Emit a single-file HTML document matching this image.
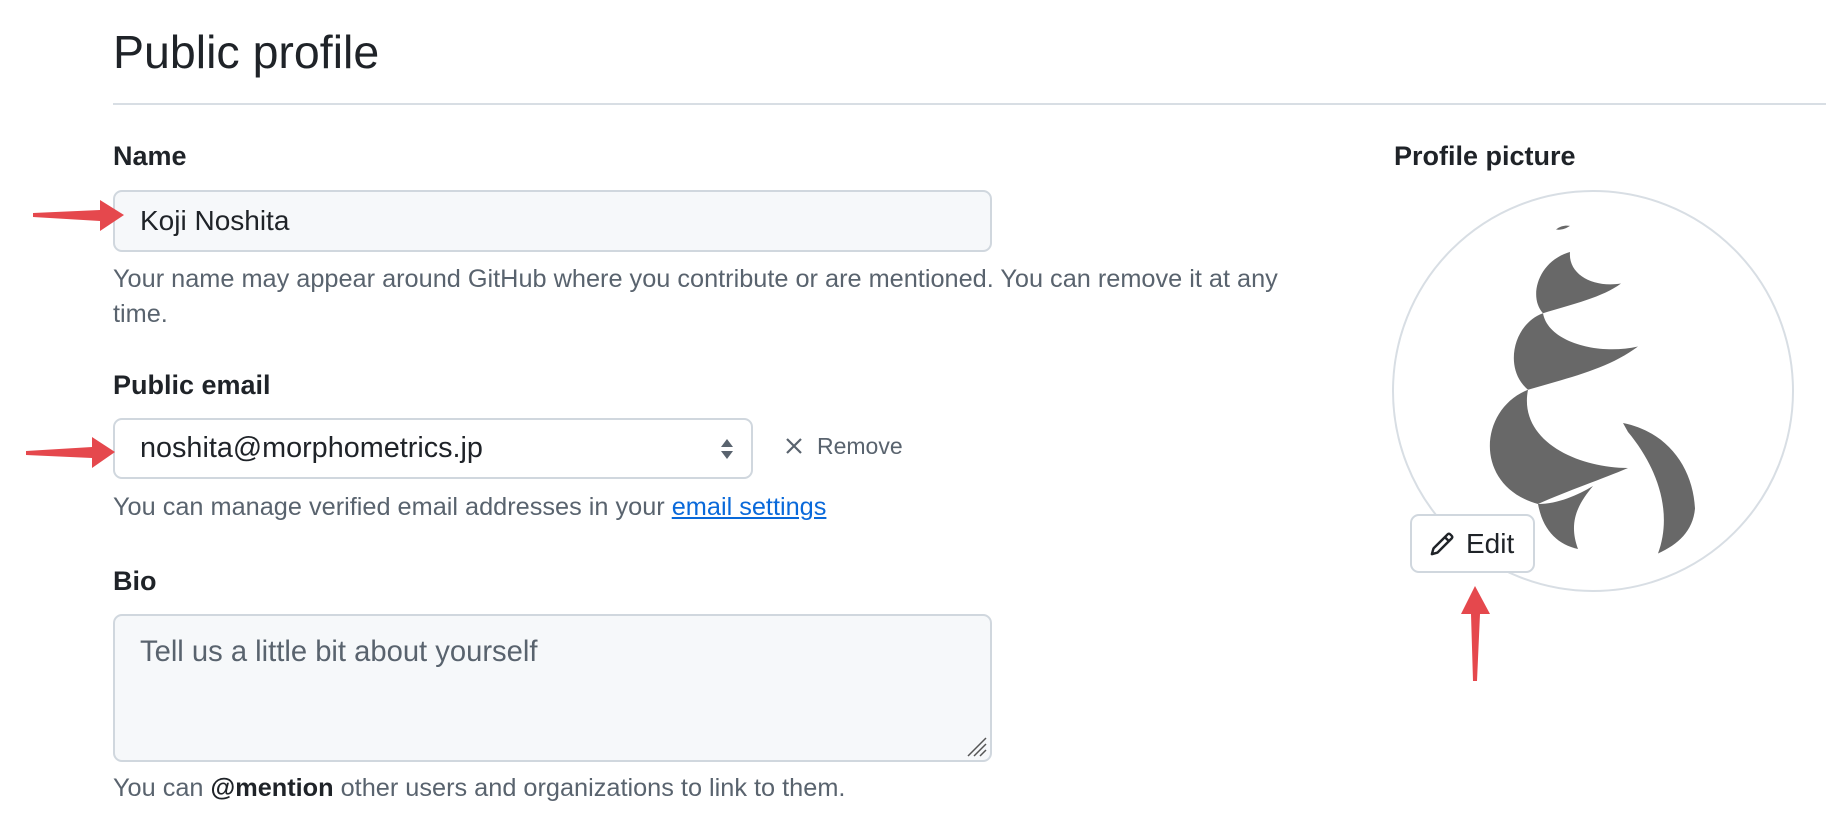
<!DOCTYPE html>
<html><head><meta charset="utf-8"><style>
*{margin:0;padding:0;box-sizing:border-box}
body{width:1826px;height:818px;background:#fff;font-family:"Liberation Sans",sans-serif;color:#1f2328;position:relative;overflow:hidden}
.a{position:absolute;white-space:nowrap}
h1{position:absolute;left:113px;top:25px;font-size:46.5px;font-weight:400}
.hr{left:113px;top:103px;width:1713px;height:2px;background:#d8dee4}
.lbl{font-size:27px;font-weight:700}
.help{font-size:25.3px;color:#59636e;line-height:35px}
.inp{border:2px solid #d0d7de;border-radius:9px;background:#f6f8fa}
.txt{font-size:28px}
</style></head><body>
<h1>Public profile</h1>
<div class="a hr"></div>

<div class="a lbl" style="left:113px;top:141px">Name</div>
<div class="a inp" style="left:113px;top:190px;width:879px;height:62px"></div>
<div class="a txt" style="left:140px;top:205px">Koji Noshita</div>
<div class="a help" style="left:113px;top:262px">Your name may appear around GitHub where you contribute or are mentioned. You can remove it at any<br>time.</div>

<div class="a lbl" style="left:113px;top:370px">Public email</div>
<div class="a inp" style="left:113px;top:418px;width:640px;height:61px;background:#fff"></div>
<div class="a txt" style="left:140px;top:432px;font-size:28.8px">noshita@morphometrics.jp</div>
<svg class="a" style="left:719px;top:438px" width="16" height="22" viewBox="0 0 16 22"><path d="M8 1L14 9H2Z M8 21L14 13H2Z" fill="#59636e"/></svg>
<svg class="a" style="left:784px;top:436px" width="20" height="20" viewBox="0 0 20 20"><path d="M3 3L17 17M17 3L3 17" stroke="#59636e" stroke-width="2.2"/></svg>
<div class="a" style="left:817px;top:433px;font-size:23px;color:#59636e">Remove</div>
<div class="a help" style="left:113px;top:490px">You can manage verified email addresses in your <span style="color:#0969da;text-decoration:underline">email settings</span></div>

<div class="a lbl" style="left:113px;top:566px">Bio</div>
<div class="a inp" style="left:113px;top:614px;width:879px;height:148px"></div>
<div class="a txt" style="left:140px;top:636px;color:#59636e;font-size:29.2px">Tell us a little bit about yourself</div>
<svg class="a" style="left:964px;top:734px" width="24" height="24"><path d="M4 22L22 4M10 22L22 10M16 22L22 16" stroke="#555" stroke-width="1.5"/></svg>
<div class="a help" style="left:113px;top:771px">You can <b style="color:#1f2328">@mention</b> other users and organizations to link to them.</div>

<div class="a lbl" style="left:1394px;top:141px">Profile picture</div>
<div class="a" style="left:1392px;top:190px;width:402px;height:402px;border:2px solid #d8dee4;border-radius:50%"></div>
<svg class="a" style="left:1392px;top:190px" width="402" height="402" viewBox="0 0 402 402">
<g fill="#686868" transform="translate(26,8) scale(1,0.9)">
<path d="M152 60 C 120 70,110 110,125 128 C 155 118,185 110,203 95 C 175 100,150 85,152 60Z"/>
<path d="M125 128 C 95 140,85 190,110 213 C 150 200,190 190,220 165 C 180 175,130 160,125 128Z"/>
<path d="M110 213 C 60 235,55 320,120 340 C 150 325,185 312,210 300 C 160 300,100 270,110 213Z"/>
<path d="M205 250 C 250 260,275 300,277 345 C 275 370,260 385,240 395 C 255 350,240 300,210 260Z"/>
<path d="M120 340 C 125 370,140 385,160 390 C 150 360,160 340,175 320 C 160 330,140 340,120 340Z"/>
<path d="M138 35 C 142 31,148 30,152 31 C 148 34,143 36,138 35Z"/>
</g></svg>
<div class="a" style="left:1410px;top:514px;width:125px;height:59px;border:2px solid #d0d7de;border-radius:9px;background:#fff"></div>
<svg class="a" style="left:1429px;top:531px" width="26" height="26" viewBox="0 0 16 16"><path d="M11.013 1.427a1.75 1.750 0 0 1 2.474 0l1.086 1.086a1.75 1.75 0 0 1 0 2.474l-8.61 8.61c-.21.21-.47.364-.756.445l-3.251.93a.75.75 0 0 1-.927-.928l.929-3.25c.081-.286.235-.547.445-.758l8.61-8.610Zm.176 4.823L9.75 4.81l-6.286 6.287a.253.253 0 0 0-.064.108l-.558 1.953 1.953-.558a.253.253 0 0 0 .108-.064Zm1.238-3.763a.25.25 0 0 0-.354 0L10.811 3.750l1.439 1.44 1.263-1.263a.25.25 0 0 0 0-.354Z" fill="#1f2328"/></svg>
<div class="a" style="left:1466px;top:528px;font-size:28px">Edit</div>

<svg class="a" style="left:0;top:0" width="1826" height="818">
<g fill="#e5484d">
<path d="M33 213 L100 210 L100 200 L124 215 L100 231 L100 221 L33 217Z"/>
<path d="M26 451 L92 447 L92 437 L115 452 L92 468 L92 458 L26 455Z"/>
<path d="M1473 681 L1471 614 L1461 614 L1475 586 L1490 614 L1480 614 L1477 681Z"/>
</g></svg>
</body></html>
